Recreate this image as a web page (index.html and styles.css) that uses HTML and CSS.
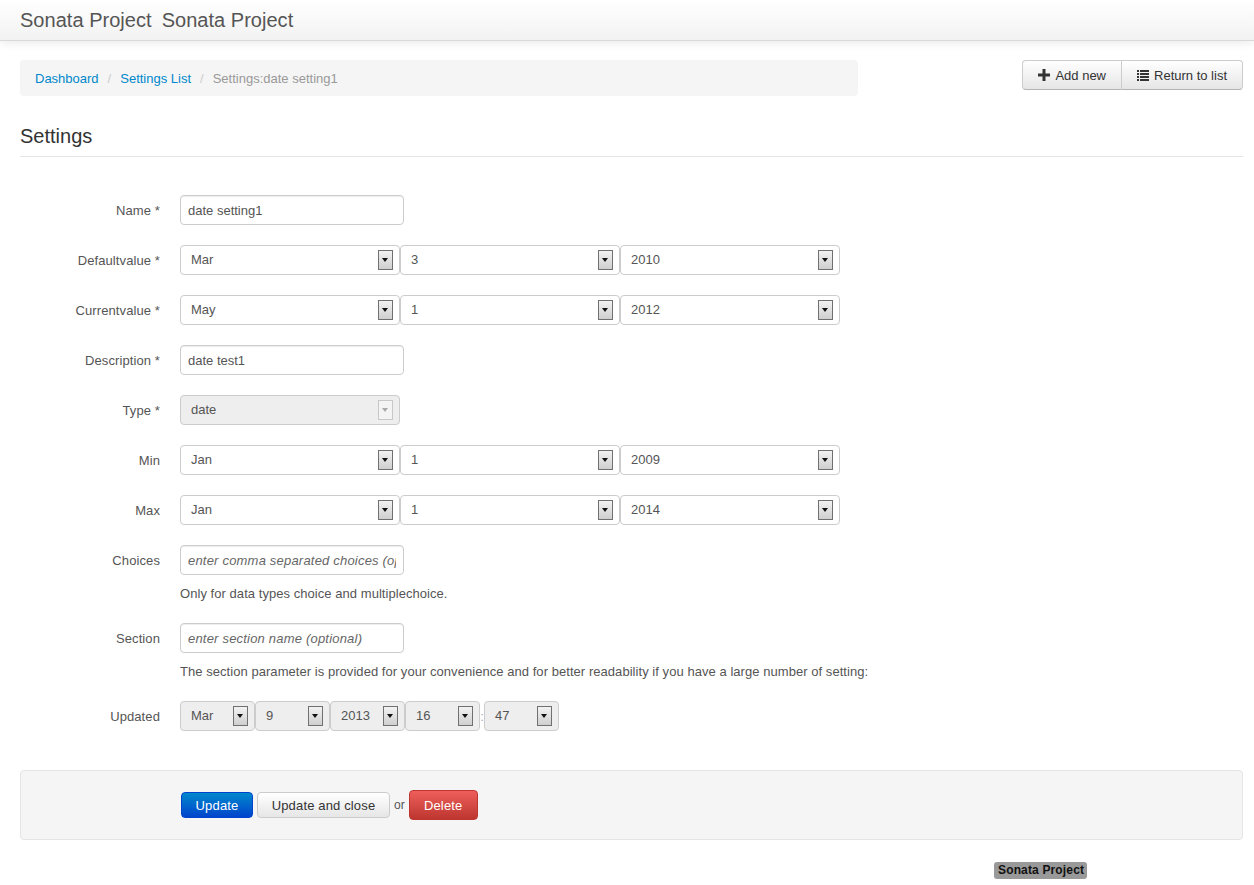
FILE: index.html
```html
<!DOCTYPE html>
<html lang="en">
<head>
    <meta charset="UTF-8">
    <meta name="viewport" content="width=device-width, initial-scale=1.0">
    <title>Settings</title>
    <link rel="stylesheet" href="styles.css">
</head>
<body>
    <div class="navbar">
        <a class="brand">Sonata Project</a>
        <a class="brand">Sonata Project</a>
    </div>

    <div class="container">
        <div class="top-row">
            <ul class="breadcrumb">
                <li><a>Dashboard</a><span class="divider">/</span></li>
                <li><a>Settings List</a><span class="divider">/</span></li>
                <li class="active">Settings:date setting1</li>
            </ul>
            <div class="btn-group">
                <a class="btn">
                    <svg class="icon" viewBox="0 0 12 12"><path d="M4.5 0h3v4.500h4.500v3h-4.500v4.500h-3v-4.500h-4.500v-3h4.500z"/></svg>
                    Add new
                </a>
                <a class="btn">
                    <svg class="icon" viewBox="0 0 12 12"><path d="M0 1h2v2h-2zM3 1h9v2h-9zM0 4h2v2h-2zM3 4h9v2h-9zM0 7h2v2h-2zM3 7h9v2h-9zM0 10h2v2h-2zM3 10h9v2h-9z"/></svg>
                    Return to list
                </a>
            </div>
        </div>

        <h3 class="page-title">Settings</h3>

        <form class="form-horizontal">
            <div class="control-group">
                <label class="control-label">Name *</label>
                <div class="controls">
                    <input class="text-input" type="text" value="date setting1">
                </div>
            </div>
            <div class="control-group">
                <label class="control-label">Defaultvalue *</label>
                <div class="controls">
                    <div class="select"><span>Mar</span><i class="arrow"></i></div>
                    <div class="select"><span>3</span><i class="arrow"></i></div>
                    <div class="select"><span>2010</span><i class="arrow"></i></div>
                </div>
            </div>
            <div class="control-group">
                <label class="control-label">Currentvalue *</label>
                <div class="controls">
                    <div class="select"><span>May</span><i class="arrow"></i></div>
                    <div class="select"><span>1</span><i class="arrow"></i></div>
                    <div class="select"><span>2012</span><i class="arrow"></i></div>
                </div>
            </div>
            <div class="control-group">
                <label class="control-label">Description *</label>
                <div class="controls">
                    <input class="text-input" type="text" value="date test1">
                </div>
            </div>
            <div class="control-group">
                <label class="control-label">Type *</label>
                <div class="controls">
                    <div class="select disabled"><span>date</span><i class="arrow"></i></div>
                </div>
            </div>
            <div class="control-group">
                <label class="control-label">Min</label>
                <div class="controls">
                    <div class="select"><span>Jan</span><i class="arrow"></i></div>
                    <div class="select"><span>1</span><i class="arrow"></i></div>
                    <div class="select"><span>2009</span><i class="arrow"></i></div>
                </div>
            </div>
            <div class="control-group">
                <label class="control-label">Max</label>
                <div class="controls">
                    <div class="select"><span>Jan</span><i class="arrow"></i></div>
                    <div class="select"><span>1</span><i class="arrow"></i></div>
                    <div class="select"><span>2014</span><i class="arrow"></i></div>
                </div>
            </div>
            <div class="control-group">
                <label class="control-label">Choices</label>
                <div class="controls">
                    <input class="text-input" type="text" placeholder="enter comma separated choices (optional)">
                </div>
                <p class="help-block">Only for data types choice and multiplechoice.</p>
            </div>
            <div class="control-group">
                <label class="control-label">Section</label>
                <div class="controls">
                    <input class="text-input" type="text" placeholder="enter section name (optional)">
                </div>
                <p class="help-block">The section parameter is provided for your convenience and for better readability if you have a large number of setting:</p>
            </div>
            <div class="control-group">
                <label class="control-label">Updated</label>
                <div class="controls">
                    <div class="select small"><span>Mar</span><i class="arrow"></i></div>
                    <div class="select small"><span>9</span><i class="arrow"></i></div>
                    <div class="select small"><span>2013</span><i class="arrow"></i></div>
                    <div class="select small"><span>16</span><i class="arrow"></i></div>
                    <span class="time-sep">:</span>
                    <div class="select small"><span>47</span><i class="arrow"></i></div>
                </div>
            </div>

            <div class="form-actions">
                <button type="button" class="btn-action btn-primary">Update</button>
                <button type="button" class="btn-action">Update and close</button>
                <span class="or">or</span>
                <button type="button" class="btn-action btn-danger">Delete</button>
            </div>
        </form>

        <div class="footer">
            <span class="footer-label">Sonata Project</span>
        </div>
    </div>
</body>
</html>
```

FILE: styles.css
```css
html, body {
    height: 100%;
}
body {
    font-family: "Liberation Sans", Arial, sans-serif;
    font-size: 13px;
    color: #555;
    margin: 0;
    padding: 0;
    background-color: #fff;
    overflow: hidden;
}
.navbar {
    display: flex;
    gap: 10px;
    height: 40px;
    padding-left: 20px;
    align-items: center;
    background: linear-gradient(to bottom, #fff, #f2f2f2);
    border-bottom: 1px solid #d9d9d9;
    box-shadow: 0 1px 10px rgba(0, 0, 0, 0.1);
}
.brand {
    font-size: 20px;
    letter-spacing: 0.03px;
    color: #555;
}
.container {
    padding: 19px 11px 0 20px;
}
.top-row {
    display: flex;
    justify-content: space-between;
    align-items: flex-start;
}
.breadcrumb {
    display: flex;
    align-items: center;
    width: 838px;
    height: 36px;
    margin: 0;
    padding: 0 15px;
    box-sizing: border-box;
    list-style: none;
    background-color: #f5f5f5;
    border-radius: 4px;
}
.breadcrumb a {
    color: #0088cc;
}
.breadcrumb .divider {
    color: #ccc;
    padding: 0 9px;
}
.breadcrumb .active {
    color: #999;
}
.btn-group {
    display: flex;
}
.btn {
    display: flex;
    align-items: center;
    gap: 5px;
    height: 28px;
    padding: 0 15px;
    color: #333;
    background: linear-gradient(to bottom, #fff, #e6e6e6);
    border: 1px solid #ccc;
    border-bottom-color: #b3b3b3;
    border-left-width: 0;
}
.btn:first-child {
    border-left-width: 1px;
    border-radius: 4px 0 0 4px;
}
.btn:last-child {
    border-radius: 0 4px 4px 0;
}
.icon {
    width: 12px;
    height: 12px;
    fill: #333;
}
.page-title {
    margin: 27px 0 0;
    height: 33px;
    font-size: 20px;
    line-height: 26px;
    font-weight: normal;
    color: #333;
    border-bottom: 1px solid #e5e5e5;
}
.form-horizontal {
    margin-top: 38px;
}
.control-group {
    display: grid;
    grid-template-columns: 140px 1fr;
    column-gap: 20px;
    min-height: 30px;
    margin-bottom: 20px;
}
.control-label {
    height: 30px;
    text-align: right;
    line-height: 31px;
    letter-spacing: 0.1px;
}
.controls {
    display: flex;
    align-items: center;
}
.text-input {
    width: 224px;
    height: 30px;
    padding: 0 7px;
    box-sizing: border-box;
    font-family: inherit;
    font-size: 13px;
    color: #555;
    border: 1px solid #ccc;
    border-radius: 4px;
    box-shadow: inset 0 1px 1px rgba(0, 0, 0, 0.075);
}
.text-input::placeholder {
    font-style: italic;
    letter-spacing: 0.2px;
    color: #666;
}
.select {
    display: flex;
    align-items: center;
    justify-content: space-between;
    width: 220px;
    height: 30px;
    padding: 0 5px 2px 10px;
    box-sizing: border-box;
    background-color: #fff;
    border: 1px solid #ccc;
    border-radius: 4px;
}
.arrow {
    position: relative;
    display: block;
    width: 15px;
    height: 20px;
    box-sizing: border-box;
    background: linear-gradient(to bottom, #f2f2f2, #cfcfcf);
    border: 1px solid #707070;
    margin-right: 1px;
    margin-bottom: -2px;
}
.arrow::after {
    content: "";
    position: absolute;
    left: 3px;
    top: 7px;
    border-style: solid;
    border-width: 4px 3.500px 0;
    border-color: #111 transparent transparent;
}
.select.disabled {
    background-color: #eee;
}
.select.disabled .arrow {
    background: #f4f4f4;
    border-color: #c8c8c8;
}
.select.disabled .arrow::after {
    border-top-color: #aaa;
}
.select.small {
    width: 75px;
    background-color: #eee;
}
.time-sep {
    width: 4px;
    color: #9ab;
    text-align: center;
}
.help-block {
    grid-column: 2;
    margin: 9px 0 0;
    line-height: 19px;
    letter-spacing: 0.05px;
    white-space: nowrap;
}
.form-actions {
    display: flex;
    align-items: center;
    gap: 4px;
    height: 70px;
    margin-top: 39px;
    padding-left: 160px;
    box-sizing: border-box;
    background-color: #f5f5f5;
    border: 1px solid #e5e5e5;
    border-radius: 4px;
}
.btn-action {
    width: 133px;
    height: 26px;
    padding: 0;
    font-family: inherit;
    font-size: 13px;
    letter-spacing: 0.15px;
    color: #333;
    background: linear-gradient(to bottom, #fff, #e6e6e6);
    border: 1px solid #ccc;
    border-radius: 4px;
}
.btn-primary {
    width: 72px;
    color: #fff;
    background: linear-gradient(to bottom, #0088cc, #0044cc);
    border-color: #04c;
}
.btn-danger {
    width: 69px;
    height: 30px;
    color: #fff;
    background: linear-gradient(to bottom, #ee5f5b, #bd362f);
    border-color: #bd362f;
}
.or {
    font-size: 12px;
}
.footer {
    margin-top: 21px;
    padding-left: 974px;
    line-height: 17px;
}
.footer-label {
    display: inline-block;
    height: 17px;
    padding: 0 3px 0 4px;
    background-color: #999;
    border-radius: 3px;
    color: #111;
    font-size: 12px;
    font-weight: bold;
    letter-spacing: 0.15px;
}
```
